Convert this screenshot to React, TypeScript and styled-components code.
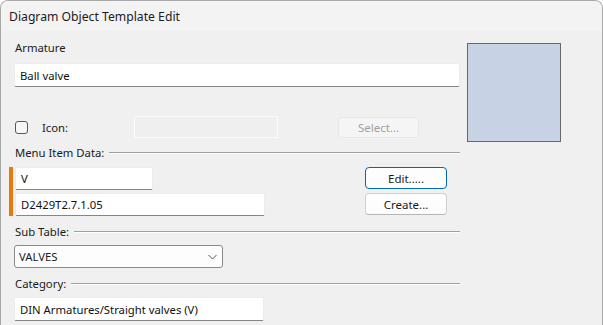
import React from "react";
import styled, { createGlobalStyle } from "styled-components";

const GlobalStyle = createGlobalStyle`
  html, body {
    margin: 0;
    padding: 0;
    background: #ffffff;
  }
  body {
    font-family: "Noto Sans", "Open Sans", "Liberation Sans", sans-serif;
    font-size: 11.3px;
    color: #1a1a1a;
  }
`;

const Window = styled.div`
  width: 603px;
  height: 325px;
  box-sizing: border-box;
  border: 1px solid #a8a8a8;
  border-bottom: none;
  border-radius: 8px 8px 0 0;
  overflow: hidden;
  background: #f0f0f0;
`;

const TitleBar = styled.div`
  height: 30px;
  background: #f3f3f3;
  padding-left: 8px;
  display: flex;
  align-items: center;
  font-size: 12.2px;
  color: #1b1b1b;
`;

const Body = styled.div`
  display: flex;
  padding: 9px 0 0 13px;
`;

const Left = styled.div`
  width: 446px;
  display: flex;
  flex-direction: column;
`;

const Label = styled.div`
  height: 16px;
  line-height: 16px;
  padding-left: 1px;
`;

const TextField = styled.div<{ $width?: number; $mt?: number }>`
  box-sizing: border-box;
  width: ${(p) => (p.$width ? `${p.$width}px` : "100%")};
  height: ${(p) => (p.$mt !== undefined ? 23 : 24)}px;
  margin-top: ${(p) => p.$mt ?? 0}px;
  background: #ffffff;
  border: 1px solid #ececec;
  border-bottom: 1px solid #858585;
  border-radius: 2px;
  padding-left: 5px;
  display: flex;
  align-items: center;
  color: #111;
`;

const IconRow = styled.div`
  margin-top: 29px;
  height: 22px;
  display: grid;
  grid-template-columns: 28px 92px 144px 60px 81px;
  align-items: center;
`;

const Check = styled.div`
  width: 13px;
  height: 13px;
  box-sizing: border-box;
  border: 1px solid #5a5a5a;
  border-radius: 3px;
  background: #f7f7f7;
  margin-left: 1px;
`;

const DisabledField = styled.div`
  height: 22px;
  box-sizing: border-box;
  border: 1px solid #fbfbfb;
  background: #efefef;
`;

const Button = styled.div<{ $variant?: "default" | "focus" | "disabled" }>`
  box-sizing: border-box;
  height: ${(p) => (p.$variant === "disabled" ? 21 : 22)}px;
  border-radius: 4px;
  display: flex;
  align-items: center;
  justify-content: center;
  font-size: 11.5px;
  background: ${(p) => (p.$variant === "disabled" ? "#f5f5f5" : "#fdfdfd")};
  color: ${(p) => (p.$variant === "disabled" ? "#a0a0a0" : "#1a1a1a")};
  border: 1px solid
    ${(p) =>
      p.$variant === "focus" ? "#0067c0" : p.$variant === "disabled" ? "#e8e8e8" : "#cfcfcf"};
  border-bottom-color: ${(p) =>
    p.$variant === "focus" ? "#0067c0" : p.$variant === "disabled" ? "#e8e8e8" : "#b5b5b5"};
`;

const SectionHeader = styled.div<{ $mt: number }>`
  margin-top: ${(p) => p.$mt}px;
  height: 16px;
  display: flex;
  align-items: center;
  padding-left: 1px;
`;

const Rule = styled.div`
  flex: 1;
  margin-left: 5px;
  margin-top: 2px;
  border-top: 1px solid #a0a0a0;
  border-bottom: 1px solid #ffffff;
`;

const Group = styled.div`
  margin-top: 7px;
  margin-left: -5px;
  border-left: 4px solid #e87a0c;
  padding-left: 2px;
  display: grid;
  grid-template-columns: 1fr 82px;
  padding-right: 13px;
`;

const Stack = styled.div<{ $gap: number }>`
  display: flex;
  flex-direction: column;
  gap: ${(p) => p.$gap}px;
`;

const SelectBox = styled.div`
  margin-top: 6px;
  width: 209px;
  height: 23px;
  box-sizing: border-box;
  background: #fdfdfd;
  border: 1px solid #8a8a8a;
  border-radius: 3px;
  display: flex;
  align-items: center;
  justify-content: space-between;
  padding: 0 5px 0 4px;
`;

const Preview = styled.div`
  margin-left: 7px;
  margin-top: 3px;
  width: 94px;
  height: 99px;
  box-sizing: border-box;
  border: 1px solid #686868;
  background: #c8d2e5;
`;

const Chevron = () => (
  <svg width="9" height="6" viewBox="0 0 9 6">
    <path d="M0.5 1 L4.5 5 L8.5 1" fill="none" stroke="#555" strokeWidth="1" />
  </svg>
);

export default function App() {
  return (
    <>
      <GlobalStyle />
      <Window>
        <TitleBar>Diagram Object Template Edit</TitleBar>
        <Body>
          <Left>
            <Label>Armature</Label>
            <TextField style={{ marginTop: 7 }}>Ball valve</TextField>

            <IconRow>
              <Check />
              <span>Icon:</span>
              <DisabledField />
              <span />
              <Button $variant="disabled">Select...</Button>
            </IconRow>

            <SectionHeader $mt={6}>
              Menu Item Data:
              <Rule />
            </SectionHeader>

            <Group>
              <Stack $gap={3}>
                <TextField $width={138} $mt={0}>V</TextField>
                <TextField $width={250} $mt={0}>D2429T2.7.1.05</TextField>
              </Stack>
              <Stack $gap={4}>
                <Button $variant="focus">Edit.....</Button>
                <Button>Create...</Button>
              </Stack>
            </Group>

            <SectionHeader $mt={7}>
              Sub Table:
              <Rule />
            </SectionHeader>
            <SelectBox>
              VALVES
              <Chevron />
            </SelectBox>

            <SectionHeader $mt={7}>
              Category:
              <Rule />
            </SectionHeader>
            <TextField $width={250} style={{ marginTop: 6 }}>
              DIN Armatures/Straight valves (V)
            </TextField>
          </Left>
          <Preview />
        </Body>
      </Window>
    </>
  );
}
